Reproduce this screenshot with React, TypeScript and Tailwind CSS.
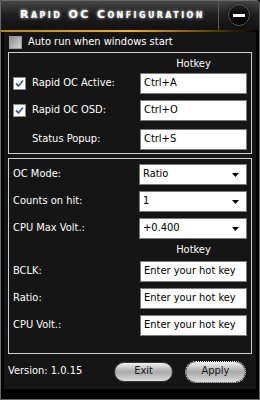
import React from 'react';

const font = "font-['DejaVu_Sans_Condensed','DejaVu_Sans',sans-serif]";

const CheckBox = ({ checked }: { checked?: boolean }) =>
  checked ? (
    <div className="w-[13px] h-[13px] bg-white border border-[#8a8a8a] flex items-center justify-center shrink-0">
      <svg width="9" height="9" viewBox="0 0 9 9">
        <path d="M1 4.5 L3.5 7 L8 1.5" fill="none" stroke="#3b5ea8" strokeWidth="1.8" />
      </svg>
    </div>
  ) : (
    <div className="w-[13px] h-[13px] border border-[#9a9a9a] bg-gradient-to-br from-[#8c8c8c] to-[#d8d8d8] shrink-0" />
  );

const TextBox = ({ value }: { value: string }) => (
  <div className="h-[21px] w-[107px] bg-white border border-[#7a7a7a] flex items-center pl-[3px] text-black text-[11px]">
    {value}
  </div>
);

const Select = ({ value }: { value: string }) => (
  <div className="h-[21px] w-[108px] bg-white border border-[#7a7a7a] flex items-center justify-between pl-[3px] pr-[7px] text-black text-[11px]">
    <span>{value}</span>
    <svg width="7" height="4" viewBox="0 0 7 4">
      <path d="M0 0 H7 L3.5 4 Z" fill="#000" />
    </svg>
  </div>
);

const Row = ({ label, children }: { label: React.ReactNode; children: React.ReactNode }) => (
  <div className="flex items-center justify-between pr-[4px] pl-[4px]">
    <div className="flex items-center gap-[6px] text-white text-[11px]">{label}</div>
    {children}
  </div>
);

const PillButton = ({ label, focused }: { label: string; focused?: boolean }) => (
  <div
    className={`w-[59px] h-[20px] rounded-full flex items-center justify-center text-[11px] text-[#1a1a1a] bg-gradient-to-b from-[#f2f2f2] via-[#a9a9a9] to-[#dcdcdc] ${
      focused ? 'outline outline-1 outline-dotted outline-white' : 'border border-[#3a3a3a]'
    }`}
  >
    {label}
  </div>
);

export default function App() {
  return (
    <div className={`w-[260px] h-[400px] bg-black relative overflow-hidden ${font}`}>
      <div className="absolute inset-0 border border-[#6a6a6a] rounded-tr-[4px]" />
      <div className="flex flex-col h-full px-[1px] pt-0">
        {/* title bar */}
        <div className="h-[30px] flex items-stretch bg-gradient-to-b from-[#4a4a4a] via-[#1e1e1e] to-[#111] rounded-t-[3px]">
          <div className="flex-1 flex items-center justify-center text-white text-[11px] font-bold tracking-[2.4px] [font-variant:small-caps] [text-shadow:0_0_3px_#fff] font-['DejaVu_Sans',sans-serif] pl-[6px]">
            Rapid OC Configuration
          </div>
          <div className="w-[1px] bg-[#5a5a5a]" />
          <div className="w-[40px] flex items-center justify-center">
            <div className="w-[22px] h-[22px] rounded-full bg-gradient-to-b from-[#222] to-[#000] border border-[#555] flex items-center justify-center shadow-[0_0_2px_#000]">
              <div className="w-[12px] h-[3px] bg-white" />
            </div>
          </div>
        </div>
        <div className="h-[2px] bg-gradient-to-r from-[#b8860b] via-[#ffb400] to-transparent" />

        <div className="flex-1 bg-[#151515] mx-[3px] flex flex-col">
          {/* auto run */}
          <div className="h-[20px] flex items-center gap-[6px] pl-[5px] text-white text-[11px]">
            <CheckBox />
            <span>Auto run when windows start</span>
          </div>

          {/* panel 1 */}
          <div className="mx-[4px] border border-[#cfcfcf] h-[102px] flex flex-col">
            <div className="flex justify-end pr-[4px] h-[19px] items-end">
              <div className="w-[107px] text-center text-white text-[11px]">Hotkey</div>
            </div>
            <div className="flex flex-col gap-[6px] mt-[1px]">
              <Row label={<><CheckBox checked /><span>Rapid OC Active:</span></>}>
                <TextBox value="Ctrl+A" />
              </Row>
              <Row label={<><CheckBox checked /><span>Rapid OC OSD:</span></>}>
                <TextBox value="Ctrl+O" />
              </Row>
              <div className="mt-[2px]">
                <Row label={<span className="pl-[19px]">Status Popup:</span>}>
                  <TextBox value="Ctrl+S" />
                </Row>
              </div>
            </div>
          </div>

          {/* panel 2 */}
          <div className="mx-[4px] mt-[4px] border border-[#cfcfcf] h-[196px] flex flex-col pt-[5px]">
            <div className="flex flex-col gap-[6px]">
              <Row label="OC Mode:"><Select value="Ratio" /></Row>
              <Row label="Counts on hit:"><Select value="1" /></Row>
              <Row label="CPU Max Volt.:"><Select value="+0.400" /></Row>
            </div>
            <div className="flex justify-end pr-[4px] h-[22px] items-center">
              <div className="w-[107px] text-center text-white text-[11px]">Hotkey</div>
            </div>
            <div className="flex flex-col gap-[6px]">
              <Row label="BCLK:"><TextBox value="Enter your hot key" /></Row>
              <Row label="Ratio:"><TextBox value="Enter your hot key" /></Row>
              <Row label="CPU Volt.:"><TextBox value="Enter your hot key" /></Row>
            </div>
          </div>

          {/* footer */}
          <div className="h-[35px] flex items-center pl-[4px] pr-[11px]">
            <span className="text-white text-[11px] flex-1">Version: 1.0.15</span>
            <div className="flex gap-[13px]">
              <PillButton label="Exit" />
              <PillButton label="Apply" focused />
            </div>
          </div>
        </div>
        <div className="h-[11px] bg-black" />
      </div>
    </div>
  );
}
